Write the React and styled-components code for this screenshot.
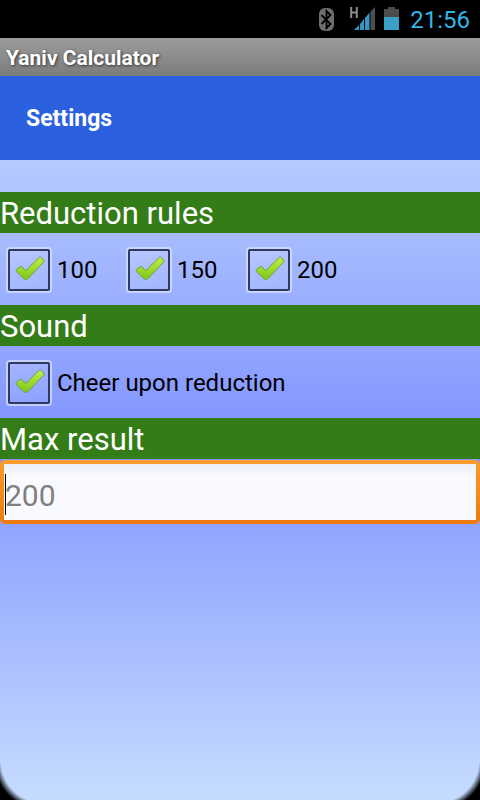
import { useState } from "react"
import styled, { createGlobalStyle } from "styled-components"

const GlobalStyle=createGlobalStyle`
    * {
        box-sizing: border-box;
    }
    body {
        margin: 0;
        background-color: black;
        font-family: Roboto, sans-serif;
    }
`
const Container=styled.div`
    min-height: 100vh;
    display: flex;
    flex-direction: column;
`
const StatusBar=styled.div`
    height: 38px;
    padding-right: 10px;
    display: flex;
    align-items: center;
    justify-content: flex-end;
    background-color: black;
`
const StatusIcons=styled.svg`
    width: 84px;
    height: 38px;
    margin-right: 9px;
`
const Clock=styled.time`
    padding-top: 2px;
    color: #33b5e5;
    font-size: 24px;
    line-height: 36px;
`
const TitleBar=styled.div`
    height: 38px;
    padding: 0 6px;
    color: white;
    font-size: 21px;
    font-weight: 700;
    line-height: 40px;
    text-shadow: 1px 1px 3px #333;
    background: linear-gradient(#9c9c9c, #7c7c7c);
`
const Main=styled.main`
    flex: 1;
    display: flex;
    flex-direction: column;
    background:
        radial-gradient(circle at 44px -4px, transparent 43px, black 50px) 0 100% / 28px 36px no-repeat,
        radial-gradient(circle at -16px -4px, transparent 43px, black 50px) 100% 100% / 28px 36px no-repeat,
        linear-gradient(#c6dcff, #8093ff 50%, #c6dcff);
`
const Header=styled.h1`
    margin: 0 0 32px;
    padding: 2px 26px 0;
    color: white;
    font-size: 23px;
    font-weight: 700;
    line-height: 82px;
    background-color: #2b60de;
`
const SectionTitle=styled.h2`
    margin: 0;
    height: 41px;
    color: white;
    font-size: 31px;
    font-weight: 400;
    line-height: 43px;
    background-color: #347c17;
`
const Row=styled.div`
    height: 72px;
    padding: 2px 6px 0;
    display: flex;
    align-items: center;
`
const Option=styled.label`
    min-width: 120px;
    display: flex;
    align-items: center;
    gap: 5px;
    color: black;
    font-size: 24px;
    line-height: 32px;
`
const Box=styled.span`
    width: 46px;
    height: 46px;
    display: grid;

    & > * {
        grid-area: 1 / 1;
    }
`
const Tick=styled.input`
    appearance: none;
    margin: 2px;
    border: 2px solid #303a5e;
    border-radius: 2px;
    box-shadow: 0 0 0 2px rgba(214, 224, 255, 0.75);
    background: linear-gradient(160deg, rgba(255, 255, 255, 0.2), rgba(255, 255, 255, 0.05));

    &:not(:checked) + svg {
        display: none;
    }
`
const Mark=styled.svg`
    width: 46px;
    height: 46px;
    pointer-events: none;
`
const Field=styled.div`
    position: relative;
    margin-top: 1px;
    padding: 4px;
    border-radius: 5px;
    background: linear-gradient(#fb9c2c, #ed7a0e);
`
const Input=styled.input`
    display: block;
    width: 100%;
    height: 56px;
    padding: 7px 1px 0;
    border: none;
    outline: none;
    color: black;
    caret-color: transparent;
    font-family: inherit;
    font-size: 30px;
    background: linear-gradient(#eceff6, #f9faff 12px);

    &::placeholder {
        color: #808080;
        opacity: 1;
    }
`
const Caret=styled.span`
    position: absolute;
    top: 14px;
    left: 5px;
    width: 1px;
    height: 41px;
    background-color: black;
`

const CheckOption = ({ label }) => {
  const [checked, setChecked] = useState(true)
  return (
      <Option>
          <Box>
              <Tick type="checkbox" checked={checked} onChange={(e) => setChecked(e.target.checked)}/>
              <Mark viewBox="0 0 46 46" aria-hidden="true">
                  <defs>
                      <linearGradient id="tick" x1="0" y1="0" x2="0" y2="1">
                          <stop offset="0" stopColor="#c0ee4c"/>
                          <stop offset="1" stopColor="#7cc814"/>
                      </linearGradient>
                  </defs>
                  <path d="M10.5 22.6 L13.8 19.6 Q14.8 18.8 15.8 19.8 L19.8 23.6 L33 10.4 Q34.2 9.4 35.4 10.6 L37.6 13 Q38.4 14.2 37.4 15.4 L21.8 31.8 Q19.8 33.2 17.8 31.8 L10.6 24.8 Q9.6 23.6 10.5 22.6 Z" fill="url(#tick)" stroke="#6f9c56" strokeWidth="1"/>
              </Mark>
          </Box>
          {label}
      </Option>
  )
}

const App = () => {
  const [max, setMax] = useState("")
  return (
      <Container>
          <GlobalStyle/>
          <StatusBar>
              <StatusIcons viewBox="317 0 84 38" aria-hidden="true">
                  <rect x="319" y="8" width="15" height="23" rx="6" fill="#6e6e6e"/>
                  <path d="M321.5 15 L330.5 24 L326.5 28 V11 L330.5 15 L321.5 24" fill="none" stroke="black" strokeWidth="1.8"/>
                  <path d="M351.2 7 V18 M356.8 7 V18 M351 12.5 H357" fill="none" stroke="#8c8c8c" strokeWidth="2"/>
                  <path d="M354 30 L359 25 V30 Z M360 24 L364 19 V30 H360 Z M365 18 L369.500 12.5 V30 H365 Z" fill="#3197c0"/>
                  <path d="M370.500 11.500 L375 7 V30 H370.500 Z" fill="#4c4c4c"/>
                  <path d="M384 9 H388 V7 H395 V9 H399 V17 H384 Z" fill="#4c4c4c"/>
                  <rect x="384" y="17" width="15" height="13" fill="#3aa0c8"/>
              </StatusIcons>
              <Clock>21:56</Clock>
          </StatusBar>
          <TitleBar>Yaniv Calculator</TitleBar>
          <Main>
              <Header>Settings</Header>
              <SectionTitle>Reduction rules</SectionTitle>
              <Row>
                  <CheckOption label="100"/>
                  <CheckOption label="150"/>
                  <CheckOption label="200"/>
              </Row>
              <SectionTitle>Sound</SectionTitle>
              <Row>
                  <CheckOption label="Cheer upon reduction"/>
              </Row>
              <SectionTitle id="max-result">Max result</SectionTitle>
              <Field>
                  <Input
                      aria-labelledby="max-result"
                      inputMode="numeric"
                      placeholder="200"
                      value={max}
                      onChange={(e) => setMax(e.target.value)}
                  />
                  {max === "" && <Caret/>}
              </Field>
          </Main>
      </Container>
  )
}

export default App
